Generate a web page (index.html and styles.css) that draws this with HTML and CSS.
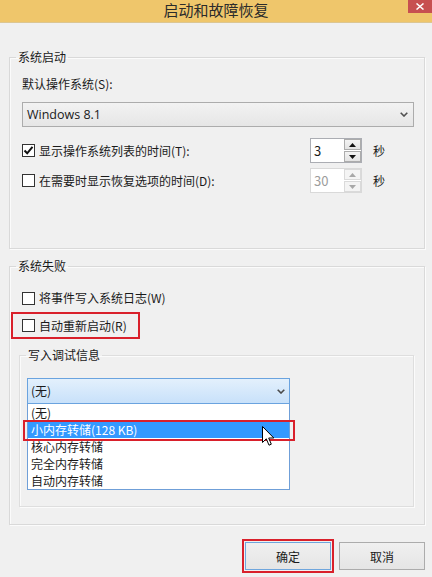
FILE: index.html
```html
<!DOCTYPE html>
<html lang="zh-CN">
<head>
<meta charset="utf-8">
<title>启动和故障恢复</title>
<link rel="stylesheet" href="styles.css">
</head>
<body>
<div class="window">
  <header class="titlebar">
    <span class="title">启动和故障恢复</span>
    <span class="close"><svg width="8" height="7" viewBox="0 0 8 7"><path d="M0.5 0.5 L7.5 6.5 M7.5 0.5 L0.5 6.5" stroke="#fff" stroke-width="1.5"/></svg></span>
  </header>
  <main class="content">
    <fieldset class="group startup">
      <legend>系统启动</legend>
      <div class="label">默认操作系统(S):</div>
      <div class="combo">
        <span class="combo-text latin">Windows 8.1</span>
        <svg class="chev" width="8" height="5" viewBox="0 0 8 5"><path d="M0.7 0.7 L4 4 L7.3 0.7" stroke="#505050" stroke-width="1.6" fill="none"/></svg>
      </div>
      <div class="row first">
        <label class="check"><span class="box"><svg width="11" height="11" viewBox="0 0 11 11"><path d="M1.5 5.5 L4.2 8.3 L9.5 1.8" stroke="#111" stroke-width="2" fill="none"/></svg></span>显示操作系统列表的时间(T):</label>
        <div class="spin">
          <span class="val">3</span>
          <div class="spin-btns">
            <span class="sb"><svg width="7" height="4" viewBox="0 0 7 4"><path d="M0 4 L3.5 0 L7 4Z" fill="#111"/></svg></span>
            <span class="sb"><svg width="7" height="4" viewBox="0 0 7 4"><path d="M0 0 L3.5 4 L7 0Z" fill="#111"/></svg></span>
          </div>
        </div>
        <span class="unit">秒</span>
      </div>
      <div class="row">
        <label class="check"><span class="box"></span>在需要时显示恢复选项的时间(D):</label>
        <div class="spin disabled">
          <span class="val">30</span>
          <div class="spin-btns">
            <span class="sb"><svg width="7" height="4" viewBox="0 0 7 4"><path d="M0 4 L3.5 0 L7 4Z" fill="#a8a8a8"/></svg></span>
            <span class="sb"><svg width="7" height="4" viewBox="0 0 7 4"><path d="M0 0 L3.5 4 L7 0Z" fill="#a8a8a8"/></svg></span>
          </div>
        </div>
        <span class="unit">秒</span>
      </div>
    </fieldset>

    <fieldset class="group failure">
      <legend>系统失败</legend>
      <div class="row plain">
        <label class="check"><span class="box"></span>将事件写入系统日志(W)</label>
      </div>
      <div class="row marked">
        <label class="check"><span class="box"></span>自动重新启动(R)</label>
      </div>
      <fieldset class="group debug">
        <legend>写入调试信息</legend>
        <div class="combo open">
          <span class="combo-text">(无)</span>
          <svg class="chev" width="8" height="5" viewBox="0 0 8 5"><path d="M0.7 0.7 L4 4 L7.3 0.7" stroke="#4a4a4a" stroke-width="1.6" fill="none"/></svg>
        </div>
        <ul class="list">
          <li>(无)</li>
          <li class="selected">小内存转储(128 KB)
            <svg class="cursor" width="13" height="21" viewBox="0 0 13 21"><path d="M0.5 0.5 L0.5 16.5 L4.3 12.8 L7 19.2 L9.3 18.2 L6.7 12 L11.8 12 Z" fill="#fff" stroke="#000" stroke-width="1" stroke-linejoin="miter"/></svg>
          </li>
          <li>核心内存转储</li>
          <li>完全内存转储</li>
          <li>自动内存转储</li>
        </ul>
      </fieldset>
    </fieldset>
  </main>
  <footer class="buttons">
    <button class="btn default">确定</button>
    <button class="btn">取消</button>
  </footer>
</div>
</body>
</html>
```

FILE: styles.css
```css
* { box-sizing: border-box; }

html, body {
  margin: 0;
  padding: 0;
}

body {
  width: 432px;
  height: 577px;
  overflow: hidden;
  background: #f0f0f0;
  font-family: "Noto Sans CJK SC", "Noto Sans", sans-serif;
  font-size: 12px;
  line-height: 16px;
  color: #1a1a1a;
}

.window {
  width: 432px;
  height: 577px;
}

/* title bar */
.titlebar {
  display: grid;
  grid-template-columns: 1fr auto 1fr;
  height: 23px;
  background: #efc66b;
  border-bottom: 1px solid #dcc692;
}

.title {
  grid-column: 2;
  font-size: 15px;
  line-height: 17px;
  padding-top: 1px;
  color: #2b2b2b;
}

.close {
  grid-column: 3;
  justify-self: end;
  width: 24px;
  height: 13px;
  background: #c75050;
  display: flex;
  align-items: center;
  justify-content: center;
}

/* content */
.content {
  padding: 26px 7px 0 9px;
}

.group {
  margin: 0;
  min-width: 0;
  border: 1px solid #d9d9d9;
  box-shadow: inset 1px 1px 0 #fbfbfb, 1px 1px 0 #fbfbfb;
}

.group legend {
  padding: 0 2px;
  margin-left: -6px;
  line-height: 16px;
}

.startup {
  padding: 11px 10px 55px 12px;
}

.failure {
  margin-top: 9px;
  padding: 14px 10px 17px 12px;
}

.debug {
  margin: 8px 0 0 -3px;
  padding: 15px 7px 16px 7px;
  border-color: #dedede;
}

.debug legend {
  margin-left: -1px;
}

.label {
  margin-bottom: 10px;
}

/* combo */
.combo {
  height: 25px;
  border: 1px solid #acacac;
  background: linear-gradient(#f2f2f2, #e6e6e6);
  display: flex;
  align-items: center;
  justify-content: space-between;
  padding: 0 5px 0 4px;
}

.combo-text {
  font-size: 13px;
}

.combo-text.latin {
  font-family: "Open Sans", "Noto Sans CJK SC", sans-serif;
  font-size: 12.5px;
}

.combo.open {
  width: 263px;
  height: 26px;
  border-color: #6aa3df;
  background: linear-gradient(#e3f0fc, #c8e1fa);
  padding: 0 4px 0 3px;
}

.combo.open .combo-text {
  font-size: 12px;
}

/* rows */
.row {
  display: flex;
  align-items: center;
  height: 25px;
  margin-top: 5px;
}

.row.first {
  margin-top: 11px;
}

.check {
  display: flex;
  align-items: center;
  gap: 4px;
  white-space: nowrap;
}

.box {
  width: 13px;
  height: 13px;
  border: 1px solid #333;
  background: #fff;
  display: flex;
  align-items: center;
  justify-content: center;
  flex: none;
}

.row.plain {
  height: 20px;
  margin-top: 0;
}

.row.marked {
  margin: 4px 0 0 -11px;
  width: 129px;
  height: 27px;
  border: 2px solid #d9202b;
  padding-left: 9px;
}

/* spin */
.spin {
  margin-left: auto;
  width: 52px;
  height: 25px;
  border: 1px solid #abadb3;
  background: #fff;
  display: flex;
}

.spin .val {
  flex: 1;
  padding-left: 3px;
  font-size: 13px;
  line-height: 23px;
}

.spin-btns {
  width: 17px;
  display: flex;
  flex-direction: column;
  gap: 1px;
}

.sb {
  flex: 1;
  border: 1px solid #acacac;
  background: linear-gradient(#f3f3f3, #e3e3e3);
  display: flex;
  align-items: center;
  justify-content: center;
}

.spin.disabled {
  border-color: #d9d9d9;
}

.spin.disabled .val {
  color: #9c9c9c;
}

.spin.disabled .sb {
  border-color: #dadada;
  background: #f4f4f4;
}

.unit {
  width: 52px;
  padding-left: 11px;
}

/* dropdown list */
.list {
  list-style: none;
  margin: 0;
  padding: 0;
  width: 263px;
  border: 1px solid #6f9fd8;
  border-top: none;
  background: #fff;
}

.list li {
  position: relative;
  height: 17px;
  line-height: 17px;
  padding-left: 3px;
  white-space: nowrap;
}

.list li.selected {
  background: #3399ff;
  color: #fff;
}

.list li.selected::after {
  content: "";
  position: absolute;
  left: -5px;
  right: -6px;
  top: -1px;
  bottom: -3px;
  border: 2px solid #d9202b;
}

.cursor {
  position: absolute;
  left: 234px;
  top: 5px;
  z-index: 2;
}

/* buttons */
.buttons {
  display: flex;
  justify-content: flex-end;
  gap: 8px;
  padding: 17px 7px 0 0;
}

.btn {
  width: 86px;
  height: 28px;
  border: 1px solid #acacac;
  background: linear-gradient(#f0f0f0, #e5e5e5);
  font-family: inherit;
  font-size: 12px;
  color: #1a1a1a;
  padding: 0;
}

.btn.default {
  border-color: #6fa6dd;
  outline: 2px solid #d9202b;
  outline-offset: 1px;
}
```
